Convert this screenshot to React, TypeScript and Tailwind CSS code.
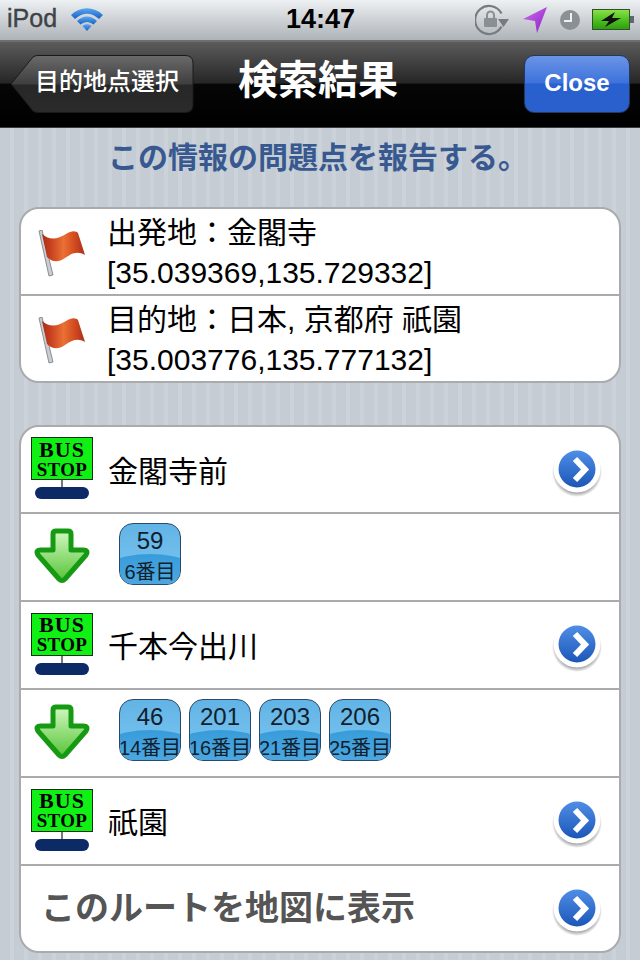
import React from "react";

function Wifi() {
  return (
    <svg width="34" height="26" viewBox="0 0 34 26" className="ml-[13px] mt-[1px]">
      <defs>
        <linearGradient id="wf" x1="0" y1="0" x2="0" y2="1">
          <stop offset="0" stopColor="#5aa8ee" />
          <stop offset="1" stopColor="#1560c8" />
        </linearGradient>
      </defs>
      <path d="M1 9 C10 0 24 0 33 9 L29 13 C21 6 13 6 5 13 Z" fill="url(#wf)" />
      <path d="M7 15 C13 9 21 9 27 15 L23.5 18.5 C19.5 15 14.5 15 10.5 18.5 Z" fill="url(#wf)" />
      <path d="M12.5 20 C15 17.8 19 17.8 21.5 20 L17 25 Z" fill="url(#wf)" />
    </svg>
  );
}

function StatusIcons() {
  return (
    <div className="flex items-center">
      <svg width="34" height="32" viewBox="0 0 34 32">
        <path d="M26.5 22.5 A14 14 0 1 1 26.5 9.5" fill="none" stroke="#777c82" strokeWidth="2.2" />
        <path d="M23 15 L34 15 L28.5 23 Z" fill="#777c82" />
        <rect x="9" y="14" width="13" height="9" rx="1" fill="#8a8f94" />
        <path d="M12 14 V11 a3.5 3.5 0 0 1 7 0 V14" fill="none" stroke="#8a8f94" strokeWidth="2" />
      </svg>
      <svg width="24" height="26" viewBox="0 0 24 26" className="ml-[14px]">
        <defs>
          <linearGradient id="lc" x1="0" y1="0" x2="1" y2="1">
            <stop offset="0" stopColor="#d070f0" />
            <stop offset="1" stopColor="#8a20c0" />
          </linearGradient>
        </defs>
        <path d="M24 0 L0 12 L12 14 L14 26 Z" fill="url(#lc)" />
      </svg>
      <svg width="20" height="20" viewBox="0 0 20 20" className="ml-[13px]">
        <circle cx="10" cy="10" r="10" fill="#8b9095" />
        <path d="M11 3 V11 H4" fill="none" stroke="#eef0f2" strokeWidth="2" />
      </svg>
      <svg width="42" height="22" viewBox="0 0 42 22" className="ml-[12px]">
        <defs>
          <linearGradient id="bt" x1="0" y1="0" x2="0" y2="1">
            <stop offset="0" stopColor="#8ce24a" />
            <stop offset="0.55" stopColor="#4cc01e" />
            <stop offset="1" stopColor="#2e9a12" />
          </linearGradient>
        </defs>
        <rect x="0.5" y="0.5" width="37" height="20" fill="url(#bt)" stroke="#33502a" />
        <rect x="38" y="7" width="4" height="7" fill="#5c6a70" />
        <path d="M23 3 L9 12 H17 L13 18 L29 9 H20 Z" fill="#111" />
      </svg>
    </div>
  );
}

function Flag() {
  return (
    <svg width="48" height="48" viewBox="0 0 48 48" className="shrink-0">
      <defs>
        <linearGradient id="fg" x1="0" y1="0" x2="1" y2="0">
          <stop offset="0" stopColor="#a82c18" />
          <stop offset="0.2" stopColor="#c8401e" />
          <stop offset="0.5" stopColor="#ea7034" />
          <stop offset="0.75" stopColor="#d44c20" />
          <stop offset="1" stopColor="#a83018" />
        </linearGradient>
      </defs>
      <path d="M1 1 L4 0 L15 45 L11 46 Z" fill="#c8ccd4" stroke="#777" strokeWidth="0.8" />
      <path
        d="M4 4 C12 11 20 9 28 4 C34 0 38 1 40 3 L47 25 C40 21 34 23 27 28 C20 33 14 32 9 27 Z"
        fill="url(#fg)"
      />
    </svg>
  );
}

function BusStop() {
  return (
    <div className="mb-[3px] flex h-[62px] w-[62px] shrink-0 flex-col items-center">
      <div className="flex h-[43px] w-[62px] flex-col items-center justify-center border border-[#153015] bg-[#10f014] text-black [font-family:'Liberation_Serif',serif] font-bold">
        <span className="text-[22px] leading-[21px] tracking-[1px]">BUS</span>
        <span className="text-[19px] leading-[19px] tracking-[0.3px]">STOP</span>
      </div>
      <div className="h-[7px] w-[2px] bg-[#777]" />
      <div className="h-[12px] w-[54px] rounded-full bg-[#0c2a66]" />
    </div>
  );
}

function DownArrow() {
  return (
    <svg width="58" height="58" viewBox="0 0 58 58" className="shrink-0">
      <defs>
        <linearGradient id="ar" x1="0" y1="0" x2="0" y2="1">
          <stop offset="0" stopColor="#d0f8c0" />
          <stop offset="1" stopColor="#58c438" />
        </linearGradient>
      </defs>
      <path
        d="M20 6 Q20 3 23 3 H35 Q38 3 38 6 V22 H50 Q56 22 53 27 L32 51 Q29 54 26 51 L5 27 Q2 22 8 22 H20 Z"
        fill="url(#ar)"
        stroke="#169a14"
        strokeWidth="5"
        strokeLinejoin="round"
      />
    </svg>
  );
}

function Disclosure() {
  return (
    <svg width="52" height="54" viewBox="0 0 52 54" className="shrink-0">
      <defs>
        <linearGradient id="ds" x1="0" y1="0" x2="0" y2="1">
          <stop offset="0" stopColor="#4f8ee6" />
          <stop offset="1" stopColor="#1c56b8" />
        </linearGradient>
        <radialGradient id="sh" cx="0.5" cy="0.5" r="0.5">
          <stop offset="0.8" stopColor="#000" stopOpacity="0.4" />
          <stop offset="1" stopColor="#000" stopOpacity="0" />
        </radialGradient>
      </defs>
      <circle cx="26" cy="29" r="25" fill="url(#sh)" />
      <circle cx="26" cy="26" r="23.5" fill="#fff" />
      <circle cx="26" cy="26" r="18.5" fill="url(#ds)" />
      <path d="M24 16 L34 26.5 L24 37" fill="none" stroke="#fff" strokeWidth="6" />
    </svg>
  );
}

function Badge({ n, label }: { n: string; label: string }) {
  return (
    <div className="relative flex h-[62px] w-[62px] flex-col items-center overflow-hidden rounded-[14px] border border-[#2a4a6a] bg-gradient-to-b from-[#62b4e6] to-[#7cc6f0]">
      <div className="absolute bottom-[-30px] left-[-30px] right-[-30px] h-[60px] rounded-[50%] bg-gradient-to-b from-[#389cda] to-[#5cb2e6]" />
      <span className="relative mt-[3px] text-[24px] leading-[28px] text-[#10202c]">{n}</span>
      <span className="relative mt-[5px] whitespace-nowrap text-[20px] leading-[24px] text-[#10202c]">
        {label}
      </span>
    </div>
  );
}

function Row({ children, last }: { children: React.ReactNode; last?: boolean }) {
  return (
    <div className={"flex items-center " + (last ? "h-[85px]" : "h-[88px] border-b-2 border-[#a9abad]")}>
      {children}
    </div>
  );
}

function StopRow({ name, first }: { name: string; first?: boolean }) {
  return (
    <div className={"flex items-center border-b-2 border-[#a9abad] " + (first ? "h-[87px]" : "h-[88px]")}>
      <div className="ml-[10px]">
        <BusStop />
      </div>
      <span className="ml-[15px] mt-[3px] flex-1 text-[30px] text-black">{name}</span>
      <div className="mr-[16px]">
        <Disclosure />
      </div>
    </div>
  );
}

function BadgeRow({ items }: { items: [string, string][] }) {
  return (
    <Row>
      <div className="ml-[12px]">
        <DownArrow />
      </div>
      <div className="mb-[6px] ml-[28px] flex gap-[8px]">
        {items.map(([n, l]) => (
          <Badge key={n} n={n} label={l} />
        ))}
      </div>
    </Row>
  );
}

function PlaceRow({ title, coord, last }: { title: string; coord: string; last?: boolean }) {
  return (
    <div className={"flex items-center " + (last ? "h-[85px]" : "h-[87px] border-b-2 border-[#a9abad]")}>
      <div className="ml-[17px] mt-[4px]">
        <Flag />
      </div>
      <div className="ml-[21px] mt-[2px] text-[30px] leading-[40px] text-black">
        <div>{title}</div>
        <div>{coord}</div>
      </div>
    </div>
  );
}

export default function App() {
  return (
    <div className="flex h-[960px] w-[640px] flex-col overflow-hidden [font-family:'Liberation_Sans','Noto_Sans_CJK_JP',sans-serif]">
      <div className="flex h-[40px] items-center justify-between bg-gradient-to-b from-[#eef1f3] to-[#aeb3b8] pl-[7px] pr-[6px]">
        <div className="mb-[3px] flex w-[200px] items-center">
          <span className="text-[25px] leading-none text-[#3f4347] [-webkit-text-stroke:0.4px_#3f4347]">iPod</span>
          <Wifi />
        </div>
        <span className="mb-[2px] text-[27px] font-bold leading-none text-black">14:47</span>
        <div className="flex w-[200px] justify-end">
          <StatusIcons />
        </div>
      </div>

      <div className="flex h-[88px] items-center border-t-2 border-b border-t-[#6d7073] border-b-[#3a3c3e] bg-[linear-gradient(#5c5c5c_0%,#262626_48%,#060606_50%,#000_100%)] pl-[10px] pr-[10px]">
        <div className="relative mb-[2px] h-[58px] w-[184px] shrink-0">
          <svg width="184" height="58" viewBox="0 0 184 58" className="absolute inset-0">
            <defs>
              <linearGradient id="bb" x1="0" y1="0" x2="0" y2="1">
                <stop offset="0" stopColor="#6a6a6a" />
                <stop offset="0.5" stopColor="#3e3e3e" />
                <stop offset="0.52" stopColor="#272727" />
                <stop offset="1" stopColor="#2b2b2b" />
              </linearGradient>
            </defs>
            <path
              d="M1 29 L23 2 Q25 0.5 28 0.5 H175 Q183 0.5 183 8 V50 Q183 57.5 175 57.5 H28 Q25 57.5 23 56 Z"
              fill="url(#bb)"
              stroke="#1a1a1a"
            />
          </svg>
          <span className="absolute inset-y-0 left-[25px] flex items-center pb-[4px] text-[24px] font-medium text-white">
            目的地点選択
          </span>
        </div>
        <div className="mb-[10px] flex flex-1 justify-center pr-[82px] text-[40px] font-bold leading-none text-white">
          検索結果
        </div>
        <div className="mb-[2px] flex h-[58px] w-[106px] shrink-0 items-center justify-center rounded-[10px] border border-[#24375c] bg-[linear-gradient(#6b94e6_0%,#3d72dc_48%,#2860d0_50%,#2a60cc_100%)] pb-[2px] text-[24px] font-bold text-white">
          Close
        </div>
      </div>

      <div className="flex flex-1 flex-col bg-[repeating-linear-gradient(90deg,#c5ccd4_0px,#c5ccd4_10px,#cbd2d9_10px,#cbd2d9_14px)] px-[19px]">
        <div className="mt-[10px] h-[40px] pr-[4px] text-center text-[30px] font-bold leading-[40px] text-[#38598f]">
          この情報の問題点を報告する。
        </div>
        <div className="mt-[29px] overflow-hidden rounded-[20px] border-2 border-[#a9abad] bg-white">
          <PlaceRow title="出発地：金閣寺" coord="[35.039369,135.729332]" />
          <PlaceRow title="目的地：日本, 京都府 祇園" coord="[35.003776,135.777132]" last />
        </div>
        <div className="mt-[42px] overflow-hidden rounded-[20px] border-2 border-[#a9abad] bg-white">
          <StopRow name="金閣寺前" first />
          <BadgeRow items={[["59", "6番目"]]} />
          <StopRow name="千本今出川" />
          <BadgeRow
            items={[
              ["46", "14番目"],
              ["201", "16番目"],
              ["203", "21番目"],
              ["206", "25番目"],
            ]}
          />
          <StopRow name="祇園" />
          <Row last>
            <span className="ml-[20px] flex-1 text-[34px] font-bold text-[#555]">このルートを地図に表示</span>
            <div className="mr-[16px]">
              <Disclosure />
            </div>
          </Row>
        </div>
      </div>
    </div>
  );
}
